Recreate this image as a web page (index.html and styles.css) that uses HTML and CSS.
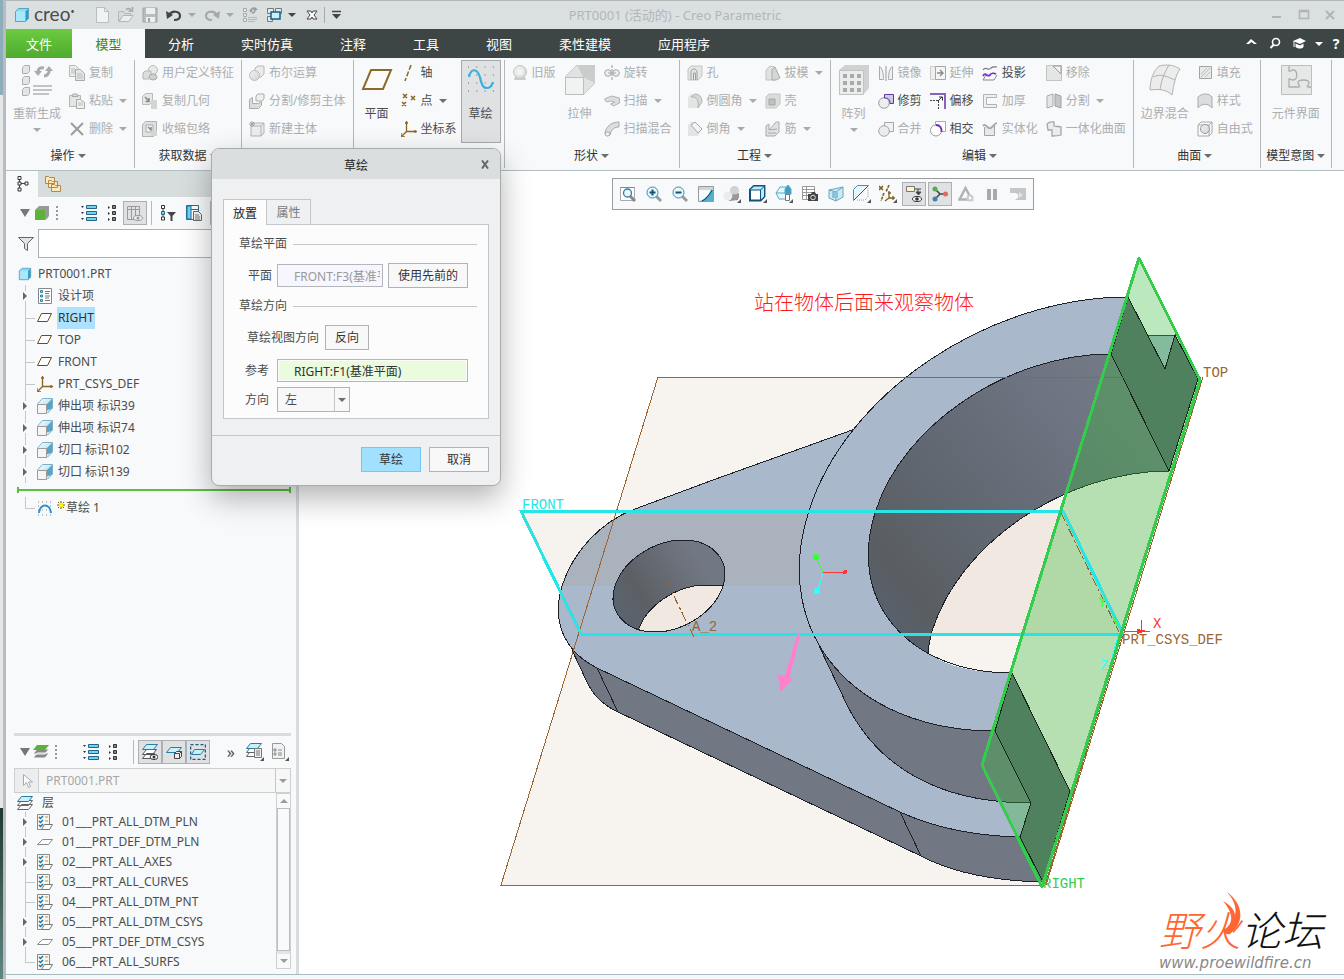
FILE: index.html
```html
<!DOCTYPE html>
<html lang="zh-CN">
<head>
    <meta charset="UTF-8">
    <meta name="viewport" content="width=device-width, initial-scale=1.0">
    <title>PRT0001 (活动的) - Creo Parametric</title>
    <link rel="stylesheet" href="styles.css">
</head>
<body>
    <!-- icon set -->
    <svg class="defs" aria-hidden="true">
        <defs>
            <linearGradient id="g-sky" x1="0" y1="0" x2="1" y2="1"><stop offset="0" stop-color="#fff"/><stop offset="1" stop-color="#8fd0e8"/></linearGradient>
            <linearGradient id="g-grey" x1="0" y1="0" x2="1" y2="1"><stop offset="0" stop-color="#f2f3f3"/><stop offset="1" stop-color="#d2d4d4"/></linearGradient>
            <linearGradient id="g-wall" x1="870" y1="600" x2="1120" y2="400" gradientUnits="userSpaceOnUse"><stop offset="0" stop-color="#57616d"/><stop offset=".12" stop-color="#5a5e62"/><stop offset=".4" stop-color="#606770"/><stop offset=".8" stop-color="#6d7380"/><stop offset="1" stop-color="#727985"/></linearGradient>
            <linearGradient id="g-bore" x1="615" y1="610" x2="700" y2="560" gradientUnits="userSpaceOnUse"><stop offset="0" stop-color="#596470"/><stop offset=".3" stop-color="#5c6065"/><stop offset="1" stop-color="#727883"/></linearGradient>
            <clipPath id="c-open"><path d="M1169,471 C1066,471 960,542 932,631 Q930,642 928,653 C947,667 975,673 1012,673 L1070,791 Z"/></clipPath>
            <clipPath id="c-bore"><path d="M683,540 C653,540 623,561 615,586 C607,611 625,632 655,632 C685,632 715,611 723,586 C731,561 713,540 683,540 Z"/></clipPath>
        </defs>
        <symbol id="i-down" viewBox="0 0 8 4"><path d="M0 0h8L4 4z" fill="currentColor"/></symbol>
        <symbol id="i-cube" viewBox="0 0 16 16"><path d="M1.500 4.500l3-3h10v10l-3 3h-10z" fill="#8adcf5"/><path d="M1.500 4.500h10v10h-10z" fill="#a9e8fb"/><path d="M11.500 4.500l3-3v10l-3 3z" fill="#2f9ec4"/><path d="M1.500 4.500l3-3h10v10l-3 3h-10z" fill="none" stroke="#5aa3c0"/></symbol>
        <symbol id="i-new" viewBox="0 0 16 16"><path d="M2.500.5h8l4 4v11h-12z" fill="#f1f3f3" stroke="#b9bdbd"/><path d="M10.500.5v4h4" fill="none" stroke="#b9bdbd"/></symbol>
        <symbol id="i-open" viewBox="0 0 16 16"><path d="M.5 14V4.500h5l1 2h6v3H5z" fill="#d8dcdc" stroke="#b2b6b6"/><path d="M1 14.500l4-6h10l-4 6z" fill="#eceeee" stroke="#b2b6b6"/><path d="M8 3c1-2 4-2 5 0M14.500 0v4h-4" fill="none" stroke="#a2a6a6" stroke-width="1.500"/></symbol>
        <symbol id="i-save" viewBox="0 0 16 16"><path d="M1 1h14v14H1z" fill="#b9bdbd" stroke="#9fa3a3"/><path d="M4 1h9v6H4zM4 10h9v5H4z" fill="#eef0f0"/><path d="M6 11h2v4H6z" fill="#9fa3a3"/></symbol>
        <symbol id="i-undo" viewBox="0 0 16 16"><path d="M3 8c3-5 11-4 11 1 0 3-3 4-6 4" fill="none" stroke="currentColor" stroke-width="2.200"/><path d="M0 4l1 8 6-4z" fill="currentColor"/></symbol>
        <symbol id="i-redo" viewBox="0 0 16 16"><path d="M13 8C10 3 2 4 2 9c0 3 3 4 6 4" fill="none" stroke="currentColor" stroke-width="2.200"/><path d="M16 4l-1 8-6-4z" fill="currentColor"/></symbol>
        <symbol id="i-regen" viewBox="0 0 32 32"><g fill="#e4e5e5" stroke="#acaeae"><path d="M1.500 3.500l2-2h5v6l-2 2h-5zM1.500 14.500l2-2h5v6l-2 2h-5zM1.500 25.500l2-2h5v6l-2 2h-5z"/></g><path d="M12 22h19M12 26h19M12 30h16" stroke="#c2c4c4" stroke-width="2"/><path d="M17 8c0-3 2-5 6-4M28 5c1 4-2 7-5 7" fill="none" stroke="#aaacac" stroke-width="3"/><path d="M13 7h8l-4 5zM24 7l4-5 4 5z" fill="#aaacac"/></symbol>
        <symbol id="i-windows" viewBox="0 0 16 16"><path d="M1.500 1.500h6v5h-6zM9.500 1.500h6v5h-6zM1.500 9.500h5v5h-5z" fill="#e6eaea" stroke="#777"/><path d="M5 5h9v7H5z" fill="#c9f0fb" stroke="#1b5c80" stroke-width="1.500"/></symbol>
        <symbol id="i-closewin" viewBox="0 0 16 16"><path d="M3 4h4l1 2 1-2h4l-3 4 3 4H9l-1-2-1 2H3l3-4z" fill="#fff" stroke="#444"/></symbol>
        <symbol id="i-copy" viewBox="0 0 16 16"><path d="M.5.5h6l3 3v8h-9z" fill="#ececec" stroke="#b8baba"/><path d="M6.500 4.500h5l4 4v7h-9z" fill="#e4e5e5" stroke="#a9abab"/><path d="M2 4h4M2 6h4M2 8h4M8 9h5M8 11h6M8 13h6" stroke="#bbb"/></symbol>
        <symbol id="i-paste" viewBox="0 0 16 16"><path d="M.5 2.500h11v11H.5z" fill="#e4e5e5" stroke="#b5b7b7"/><path d="M3 3.500h6L8 1H4z" fill="#ddd" stroke="#aaa"/><path d="M7.500 6.500h4l4 3v6h-8z" fill="#f0f0f0" stroke="#a9abab"/><path d="M9 10h5M9 12h5" stroke="#bbb"/></symbol>
        <symbol id="i-delete" viewBox="0 0 16 16"><path d="M2 2l12 12M14 2L2 14" stroke="#9b9d9d" stroke-width="2"/></symbol>
        <symbol id="i-udf" viewBox="0 0 16 16"><circle cx="11" cy="5" r="4.500" fill="#e7e8e8" stroke="#bbb"/><path d="M1 8l2-2h6v6l-2 2H1z" fill="#dcdddd" stroke="#b5b5b5"/><ellipse cx="11" cy="12" rx="4" ry="3" fill="#d0d2d2" stroke="#aaa"/></symbol>
        <symbol id="i-copygeo" viewBox="0 0 16 16"><path d="M.5 3.500l3-3h7v8l-3 3h-7z" fill="#e6e7e7" stroke="#b9bbbb"/><path d="M9 7h6v9H9z" fill="#d3d5d5"/><path d="M3 4l4 4M7 5v3.500H3.500" fill="none" stroke="#888" stroke-width="1.500"/></symbol>
        <symbol id="i-shrink" viewBox="0 0 16 16"><path d="M.5 3.500l3-3h11v12l-3 3H.5z" fill="#dfe0e0" stroke="#b1b3b3"/><path d="M4 4h7v7H4z" fill="#f2f2f2" stroke="#aaa"/><path d="M6 6l3 3V6" fill="none" stroke="#888" stroke-width="1.500"/><path d="M9 10h6v5H9z" fill="#d3d5d5"/></symbol>
        <symbol id="i-bool" viewBox="0 0 16 16"><path d="M6 3l3-2h6v8l-3 3H6z" fill="#ececec" stroke="#b9b9b9"/><circle cx="5.500" cy="10.500" r="5" fill="url(#g-grey)" stroke="#bbb"/></symbol>
        <symbol id="i-split" viewBox="0 0 16 16"><path d="M.5 6.500l3-2v6h6l3-2v4l-3 3h-9z" fill="#dcdddd" stroke="#a9abab"/><path d="M7 3l2-2h6v5l-2 2H7z" fill="#eee" stroke="#a9abab"/></symbol>
        <symbol id="i-newbody" viewBox="0 0 16 16"><path d="M2 5l3-3h10v10l-3 3H2z" fill="#ececec" stroke="#b1b3b3"/><path d="M2 5h10v10M12 5l3-3" fill="none" stroke="#b1b3b3"/><path d="M3 0v6M0 3h6M1 1l4 4M5 1L1 5" stroke="#a2a4a4"/></symbol>
        <symbol id="i-bigplane" viewBox="0 0 32 32"><path d="M10 6h20l-8 19H2z" fill="#fdfcfa" stroke="#8c6a2c" stroke-width="2"/></symbol>
        <symbol id="i-axis" viewBox="0 0 16 16"><path d="M10 0L4 16" stroke="#8a6520" stroke-width="1.500" stroke-dasharray="5 2"/></symbol>
        <symbol id="i-point" viewBox="0 0 16 16"><path d="M2 1l4 4M6 1L2 5M10 3l4 4M14 3l-4 4M1 9l4 4M5 9l-4 4" stroke="#8a6520" stroke-width="1.500"/></symbol>
        <symbol id="i-csys" viewBox="0 0 16 16"><path d="M5.500 0v10.500H16M5.500 10.500L1 15M4 2h3M14 9v3M0 12v4h4" fill="none" stroke="#8a6520" stroke-width="1.300"/></symbol>
        <symbol id="i-sketch" viewBox="0 0 32 32"><path d="M3 3h26M3 11h26M3 19h26M3 27h26" stroke="#666" stroke-dasharray="1 7.300"/><path d="M4 13C6 4 12 4 15 13c2 10 4 11 7 11 4 0 5-3 6-6" fill="none" stroke="#3ab0dc" stroke-width="2.200"/></symbol>
        <symbol id="i-legacy" viewBox="0 0 16 16"><path d="M3 12h10l1 3H2z" fill="#ccc"/><circle cx="8" cy="7" r="6.500" fill="url(#g-grey)" stroke="#c2c4c4"/><circle cx="8" cy="7" r="3.500" fill="#f2f2f2"/></symbol>
        <symbol id="i-bigextrude" viewBox="0 0 32 32"><path d="M1 13L13 1h18v18L19 31V13z" fill="#e1e2e2"/><path d="M13 1h18v18L19 13z" fill="#cbcdcd"/><path d="M1.500 13.500h18v17h-18z" fill="#f1f2f2" stroke="#bdbfbf"/><path d="M1 13L13 1M19 13L31 1M19 31l12-12" stroke="#c5c7c7" fill="none"/></symbol>
        <symbol id="i-revolve" viewBox="0 0 16 16"><path d="M8 0v16" stroke="#999" stroke-dasharray="3 1"/><circle cx="4" cy="8" r="3.300" fill="#eee" stroke="#a5a7a7"/><circle cx="12" cy="8" r="3.300" fill="#eee" stroke="#a5a7a7"/><path d="M4 8h8" stroke="#a5a7a7"/></symbol>
        <symbol id="i-sweep" viewBox="0 0 16 16"><path d="M.5 6l7-3 8 2v5l-6 3-3-2 4-2-4-1-4 1z" fill="#dcdddd" stroke="#b1b3b3"/></symbol>
        <symbol id="i-blend" viewBox="0 0 16 16"><path d="M1 12C2 5 8 1 15 1v5c-4 0-8 2-9 8l-3 1z" fill="#dcdddd" stroke="#a8aaaa"/><ellipse cx="3.500" cy="13" rx="2.500" ry="2" fill="#f2f2f2" stroke="#a8aaaa"/></symbol>
        <symbol id="i-hole" viewBox="0 0 16 16"><path d="M1 4l3-3h11v10l-4 4H1z" fill="#e4e5e5" stroke="#c3c5c5"/><path d="M4 15V7c0-4 6-4 6 0v8M6.500 15V8h2v7" fill="none" stroke="#9fa1a1"/></symbol>
        <symbol id="i-draft" viewBox="0 0 16 16"><path d="M1 5l4-4 5 1v13H1z" fill="#e0e1e1" stroke="#c2c4c4"/><path d="M7 5l3-3 5 11-4 2H7z" fill="#d4d6d6" stroke="#aaacac"/></symbol>
        <symbol id="i-round" viewBox="0 0 16 16"><path d="M1 4l3-3h4c5 0 7 3 7 8l-4 6H1z" fill="#e3e4e4"/><path d="M4 4c6-1 8 4 7 11l4-6C15 4 12 1 8 1z" fill="#d6d8d8" stroke="#b1b3b3"/></symbol>
        <symbol id="i-shell" viewBox="0 0 16 16"><path d="M1 4l3-3h11v10l-4 4H1z" fill="#dbdcdc" stroke="#c3c5c5"/><path d="M4 6h6v6H4z" fill="#bfc1c1" stroke="#a5a7a7"/></symbol>
        <symbol id="i-chamfer" viewBox="0 0 16 16"><path d="M1 4l3-3h4l7 7-4 7H1z" fill="#e3e4e4"/><path d="M4 4l4-3 7 7-4 4z" fill="#f4f4f4" stroke="#a5a7a7"/></symbol>
        <symbol id="i-rib" viewBox="0 0 16 16"><path d="M1 5l3-2v6l7-8h3v10l-4 4H1z" fill="#e0e1e1" stroke="#aaacac"/><path d="M4 9l8-1M3 12h8" stroke="#aaa"/></symbol>
        <symbol id="i-pattern" viewBox="0 0 32 32"><path d="M1 6l6-5h24v23l-6 7H1z" fill="#d0d2d2"/><path d="M1.500 6.500h24v24h-24z" fill="#ebecec" stroke="#c0c2c2"/><g fill="#a9abab"><path d="M5 10h4v4H5zM12 10h4v4h-4zM19 10h4v4h-4zM5 17h4v4H5zM12 17h4v4h-4zM19 17h4v4h-4zM5 24h4v4H5zM12 24h4v4h-4zM19 24h4v4h-4z"/></g></symbol>
        <symbol id="i-mirror" viewBox="0 0 16 16"><path d="M1.500 14.500v-13c4 2 4 11 4 13zM14.500 14.500v-13c-4 2-4 11-4 13z" fill="#f0f1f1" stroke="#a9abab"/><path d="M8 1v15" stroke="#999"/></symbol>
        <symbol id="i-trim" viewBox="0 0 16 16"><circle cx="6" cy="10" r="5.300" fill="#edeef0" stroke="#9a9da0"/><path d="M6.500 1.500h9v9H12C12 6 10 5 6.500 5z" fill="#d5c8f0" stroke="#5b3a9b"/></symbol>
        <symbol id="i-merge" viewBox="0 0 16 16"><path d="M6.500 1.500h9v9h-9z" fill="#f1f1f1" stroke="#a5a7a7"/><circle cx="6" cy="10" r="5.300" fill="#ececec" stroke="#a5a7a7"/></symbol>
        <symbol id="i-extend" viewBox="0 0 16 16"><path d="M.5 1.500h5v13h-5z" fill="#eee" stroke="#ccc"/><path d="M5.500 1.500h10v13h-10z" fill="#f4f4f4" stroke="#a5a7a7"/><path d="M7 8h6M10 5l3 3-3 3" fill="none" stroke="#888" stroke-width="1.300"/></symbol>
        <symbol id="i-offset" viewBox="0 0 16 16"><path d="M0 1h15v15" fill="none" stroke="#8763bd" stroke-width="2"/><path d="M0 7.500h8.500V16" fill="none" stroke="#444" stroke-dasharray="2 1"/><path d="M8 8l4-4M9 4h3.500v3.500" fill="none" stroke="#333"/></symbol>
        <symbol id="i-intersect" viewBox="0 0 16 16"><path d="M5.500.5h10v10h-10z" fill="#fdfdfd" stroke="#aaa"/><circle cx="6" cy="9.500" r="5.500" fill="#fff" stroke="#999"/><path d="M6 4c4 0 6 3 5.500 7" fill="none" stroke="#6a2fb0" stroke-width="1.800"/></symbol>
        <symbol id="i-project" viewBox="0 0 16 16"><path d="M1 5c3-5 5 2 8-2 2-2 4-1 6-1" fill="none" stroke="#777" stroke-width="1.200"/><path d="M4 10L1 15h11l3-5" fill="none" stroke="#888"/><path d="M1 11c3-5 4 2 7-1 1-2 4-2 6-1" fill="none" stroke="#7b2fd0" stroke-width="1.800"/></symbol>
        <symbol id="i-thicken" viewBox="0 0 16 16"><path d="M14.500 1.500h-13v13h13v-3h-10v-7h10z" fill="#f0f0f0" stroke="#b1b3b3"/></symbol>
        <symbol id="i-solidify" viewBox="0 0 16 16"><path d="M2.500 6v8.500h10V4" fill="#e7e8e8" stroke="#a2a4a4"/><path d="M1 5c3-4 4 4 8 2 2-1 2-4 6-5" fill="none" stroke="#a2a4a4" stroke-width="1.600"/></symbol>
        <symbol id="i-remove" viewBox="0 0 16 16"><path d="M.5.500h15v15H.5z" fill="#e4e5e5" stroke="#c3c5c5"/><path d="M7 1l8 8V1z" fill="#f4f4f4" stroke="#999"/></symbol>
        <symbol id="i-divide" viewBox="0 0 16 16"><path d="M1 3l6-2v12l-6 2z" fill="#e4e5e5" stroke="#a9abab"/><path d="M9 1l6 2v12l-6-2z" fill="#c4c6c6" stroke="#a0a2a2"/></symbol>
        <symbol id="i-unify" viewBox="0 0 16 16"><path d="M1 3c3-3 5-2 7-2v4c3 1 5 0 7 1v8c-3 1-6 1-9 1V9H2z" fill="#ececec" stroke="#a5a7a7" stroke-width="1.300"/></symbol>
        <symbol id="i-boundary" viewBox="0 0 32 32"><path d="M10 2c8-2 15-1 21 3-5 7-6 16-8 26-6-6-14-6-22-5C1 16 4 8 10 2z" fill="#ececec" stroke="#b1b3b3"/><path d="M4 13c8-4 15 0 22 3M20 1c-5 8-8 17-9 25" fill="none" stroke="#b1b3b3"/></symbol>
        <symbol id="i-fill" viewBox="0 0 16 16"><path d="M2.500 1.500h12v12h-12z" fill="#e8e9e9" stroke="#a2a4a4"/><path d="M4 9l6-6M4 12l9-9M8 12l5-5" stroke="#bcbebe"/></symbol>
        <symbol id="i-style" viewBox="0 0 16 16"><path d="M1 4c4-4 11-4 14 0v11c-4-5-10-5-14 0z" fill="#dcdede" stroke="#a9abab"/></symbol>
        <symbol id="i-freestyle" viewBox="0 0 16 16"><path d="M1 4l3-3h11v11l-3 3H1zM1 4h11v11M12 4l3-3" fill="none" stroke="#aaa"/><circle cx="8" cy="8" r="4.500" fill="url(#g-grey)" stroke="#999"/></symbol>
        <symbol id="i-puzzle" viewBox="0 0 32 32"><path d="M1.500 1.500h30v29h-30z" fill="#e6e7e7" stroke="#bdbfbf"/><path d="M9 2v5c1 1 2-1 4-1 5 0 5 10 0 10-2 0-3-2-4-1v8h10c2-1-1-2-1-4 0-4 11-4 11 0 0 2-3 3-1 4h3" fill="none" stroke="#acaeae" stroke-width="1.300"/></symbol>
        <symbol id="i-modeltree" viewBox="0 0 16 16"><path d="M3.500 3v10M5 7.500h6" stroke="#444"/><path d="M2 .5h3v3H2zM2 6h3v3H2zM2 12h3v3H2zM9 6h3v3H9z" fill="#fff" stroke="#333"/></symbol>
        <symbol id="i-folders" viewBox="0 0 16 16"><g fill="#fbe8bd" stroke="#b18b45"><path d="M.5.500h3l1 1h5v6h-9zM3.500 4.500h3l1 1h5v6h-9zM6.500 8.500h3l1 1h5v6h-9z"/></g></symbol>
        <symbol id="i-greencube" viewBox="0 0 16 16"><path d="M1 5l4-4h10v10l-3 4z" fill="#999"/><path d="M1 5h10v10H1z" fill="#5bb435"/></symbol>
        <symbol id="i-dots" viewBox="0 0 4 16"><path d="M2 1v15" stroke="#999" stroke-width="2" stroke-dasharray="2 2"/></symbol>
        <symbol id="i-list" viewBox="0 0 16 16"><path d="M5.500.500h10v3h-10zM5.500 6.500h10v3h-10zM5.500 12.500h10v3h-10z" fill="#6fd3f5" stroke="#246585"/><path d="M0 1h3L1.500 3zM0 7h3L1.500 9zM0 13h3l-1.500 2z" fill="#333"/></symbol>
        <symbol id="i-list2" viewBox="0 0 16 16"><path d="M8.500.500h3v3h-3zM8.500 6.500h3v3h-3zM8.500 12.500h3v3h-3z" fill="#888" stroke="#333"/><path d="M4 1v3l2-1.500zM4 7v3l2-1.500zM4 13v3l2-1.500z" fill="#333"/></symbol>
        <symbol id="i-colview" viewBox="0 0 16 16"><path d="M.5 1.500h12v13H.5zM.5 4.500h12M4.500 1.500v13M8.500 1.500v13" fill="none" stroke="#999"/><ellipse cx="11" cy="13" rx="4.500" ry="2.500" fill="#eee" stroke="#999"/><circle cx="11" cy="13" r="1.500" fill="#999"/></symbol>
        <symbol id="i-treefilter" viewBox="0 0 16 16"><path d="M3 4v8" stroke="#444"/><path d="M1.500.500h3v3h-3zM1.500 12h3v3h-3z" fill="#fff" stroke="#333"/><path d="M1.500 6.500h3v3h-3z" fill="#6fd3f5" stroke="#246585"/><path d="M7 7h9l-3.500 4v5h-2v-5z" fill="#444"/></symbol>
        <symbol id="i-treecols" viewBox="0 0 16 16"><path d="M.5.500h12v14H.5zM.5 4.500h12" fill="#fff" stroke="#236f95"/><path d="M1 1h4v13H1z" fill="#6fd3f5" stroke="#236f95"/><path d="M7.500 6.500h5l3 3v6h-8z" fill="#f4f4f4" stroke="#666"/><path d="M9 10h4M9 12h5M9 14h5" stroke="#777"/></symbol>
        <symbol id="i-funnel" viewBox="0 0 16 16"><path d="M.5 1.500h15l-6 6v7l-3-2v-5z" fill="#e1e3e4" stroke="#666"/></symbol>
        <symbol id="i-design" viewBox="0 0 16 16"><path d="M1.500.5h13v15h-13z" fill="#fff" stroke="#888"/><path d="M3.500 2.500h2v2h-2zM3.500 7h2v2h-2zM3.500 11.500h2v2h-2z" fill="#9be0fa" stroke="#2a84ad"/><path d="M8 3.500h5M8 5.500h4M8 8h5M8 10h4M8 12.500h5" stroke="#777"/></symbol>
        <symbol id="i-plane" viewBox="0 0 16 16"><path d="M4.500 3.500h10l-4 8H.5z" fill="#fff" stroke="#6b4d13"/></symbol>
        <symbol id="i-extrude" viewBox="0 0 16 16"><path d="M.5 6l5-5.500h10V10l-5 5.500z" fill="url(#g-sky)"/><path d="M9.500 6.500l6-6V10l-6 5.500z" fill="#5ba3c4"/><path d="M9.500 12.500l5-1.500-5 5z" fill="#d5effa"/><path d="M.5 6.500h9v9h-9z" fill="#f5f5f5" stroke="#9b9b9b"/><path d="M.5 6l5-5.500h10V10l-5 5" fill="none" stroke="#7ab2cb"/></symbol>
        <symbol id="i-curve" viewBox="0 0 16 16"><path d="M1 2h14M1 6h14M1 10h14M1 15h14" stroke="#888" stroke-dasharray="1 3"/><path d="M2 13C3 3 13 3 14 13" fill="none" stroke="#2a93c4" stroke-width="2"/></symbol>
        <symbol id="i-greenlayers" viewBox="0 0 16 16"><path d="M4 9h12l-4 5H0zM4 5h12l-4 5H0z" fill="#888" stroke="#f7f9fb"/><path d="M4 1h12l-4 5H0z" fill="#5bb435"/></symbol>
        <symbol id="i-layers" viewBox="0 0 16 16"><path d="M4.500 9.500h11l-4 5H.5zM4.500 5.500h11l-4 5H.5z" fill="#fff" stroke="#666"/><path d="M4.500 1.500h11l-4 5H.5z" fill="#c9effb" stroke="#2a7ba0"/></symbol>
        <symbol id="i-layereye" viewBox="0 0 16 16"><path d="M4.500 9.500h8l-4 5h-8zM4.500 5.500h10l-4 5h-10z" fill="#fff" stroke="#555"/><path d="M4.500.500h11l-4 5H.5z" fill="#c9effb" stroke="#2a7ba0"/><ellipse cx="12" cy="13" rx="4" ry="2.500" fill="#fff" stroke="#333"/><circle cx="12" cy="13" r="1.500" fill="#333"/></symbol>
        <symbol id="i-layerbox" viewBox="0 0 16 16"><path d="M4.500 3.500h11l-4 5H.5z" fill="#c9effb" stroke="#2a7ba0"/><path d="M8.500 9.500l2-2h5v5l-2 2h-5zM8.500 9.500h5v5M13.500 9.500l2-2" fill="#eee" stroke="#444"/></symbol>
        <symbol id="i-layersel" viewBox="0 0 16 16"><path d="M.5.500h15v15H.5z" fill="none" stroke="#1b5c80" stroke-width="1.500" stroke-dasharray="3 2"/><path d="M4.500 5.500h10l-4 5h-9z" fill="#c9effb" stroke="#2a7ba0"/></symbol>
        <symbol id="i-layerdoc" viewBox="0 0 20 20"><path d="M4.500 10.500h9l-4 4h-8zM4.500 6.500h10l-4 4h-9z" fill="#fff" stroke="#666"/><path d="M5.500 1.500h11l-4 5H1.500z" fill="#c9effb" stroke="#2a7ba0"/><path d="M9.500 6.500h7v9h-7z" fill="#eee" stroke="#777"/><path d="M11 9h4M11 11h4M11 13h4" stroke="#777"/><path d="M19 15v4h-4z" fill="#555"/></symbol>
        <symbol id="i-listdoc" viewBox="0 0 20 20"><path d="M2.500 1.500h9l3 3v12h-12z" fill="#f1f2f2" stroke="#999"/><path d="M4 7h2v2H4zM4 11h2v2H4z" fill="#fff" stroke="#888"/><path d="M8 8h4M8 11h4M8 13h4" stroke="#888"/><path d="M19 15v4h-4z" fill="#555"/></symbol>
        <symbol id="i-check" viewBox="0 0 16 16"><path d="M.5.500h12v15H.5z" fill="#fdf6e6" stroke="#8a8a8a"/><path d="M2 3l1.500 1.500L6 2M2 7l1.500 1.500L6 6M2 11l1.500 1.500L6 10" fill="none" stroke="#1378b5" stroke-width="1.500"/><path d="M8 3h3M8 7h3" stroke="#999"/><path d="M7.500 10.500h8l-3 5h-8z" fill="#fff" stroke="#777"/></symbol>
        <symbol id="i-flat" viewBox="0 0 16 16"><path d="M5.500 5.500h10l-4 5h-11z" fill="#fff" stroke="#8a8a8a"/></symbol>
        <symbol id="i-cursor" viewBox="0 0 16 16"><path d="M4.500 1.500v11l3-3 2 5 2-1-2-4.500h4z" fill="#fafafa" stroke="#aaa"/></symbol>
        <symbol id="v-refit" viewBox="0 0 16 16"><path d="M.5 1.500h14v13H.5z" fill="#fff" stroke="#aaa"/><path d="M.5 1.500h14" stroke="#888"/><path d="M10 10l5 5" stroke="#888" stroke-width="3"/><circle cx="7.500" cy="7" r="4" fill="#e8f8fd" stroke="#2f7da0" stroke-width="1.300"/></symbol>
        <symbol id="v-in" viewBox="0 0 16 16"><path d="M10 10l5 5" stroke="#999" stroke-width="3"/><circle cx="6.500" cy="6.500" r="5.500" fill="#e8f8fd" stroke="#3e8aab"/><path d="M3.500 6.500h6M6.500 3.500v6" stroke="#0f5378" stroke-width="2"/></symbol>
        <symbol id="v-out" viewBox="0 0 16 16"><path d="M10 10l5 5" stroke="#999" stroke-width="3"/><circle cx="6.500" cy="6.500" r="5.500" fill="#e8f8fd" stroke="#3e8aab"/><path d="M3.500 6.500h6" stroke="#0f5378" stroke-width="2"/></symbol>
        <symbol id="v-repaint" viewBox="0 0 16 16"><path d="M.5.500h15v15H.5z" fill="#cfd6d9" stroke="#999"/><path d="M1 4h14v11H1z" fill="#55b0cf"/><path d="M1 4h13C12 10 8 14 1 15z" fill="#f2fbfe"/><path d="M4 15c2-1 7-5 10-11" fill="none" stroke="#17506e" stroke-width="1.300"/></symbol>
        <symbol id="v-render" viewBox="0 0 18 18"><path d="M4 10l6-5 5 1v9l-9 1z" fill="#8b8b8b"/><circle cx="11.500" cy="5.500" r="4.500" fill="#d2d2d2"/><circle cx="5" cy="11" r="4.500" fill="#ececec"/><path d="M10 9c2 1 4 0 6-1v5c-2 2-4 2-6 2z" fill="#999"/><path d="M18 14v4h-4z" fill="#555"/></symbol>
        <symbol id="v-display" viewBox="0 0 18 18"><path d="M.7 4.500l4-3.800h11v11l-4 4H.7z" fill="#b9ebfb" stroke="#0f5378" stroke-width="1.400"/><path d="M1.500 5h10v10h-10z" fill="#fff" stroke="#0f5378"/><path d="M11.500 5l4-4" stroke="#0f5378"/><path d="M18 14v4h-4z" fill="#555"/></symbol>
        <symbol id="v-saved" viewBox="0 0 18 18"><path d="M1 8l4-6h6l5 6-4 6H4z" fill="#e5f8fe" stroke="#59a8c6"/><path d="M1 8h15" stroke="#59a8c6"/><path d="M10 9V4l3-4 3 4v5z" fill="#3ba0c5" stroke="#59a8c6"/><path d="M10.500 9.500h4v6h-4z" fill="#fff" stroke="#777"/><path d="M18 14v4h-4z" fill="#555"/></symbol>
        <symbol id="v-manager" viewBox="0 0 16 16"><path d="M.5.500h12v13H.5zM.5 3.500h12M.5 6.500h12M.5 9.500h12M4.500.500v13" fill="#fff" stroke="#999"/><path d="M6 8h3l1-2h3l1 2h2v7H6z" fill="#444"/><circle cx="11" cy="11.500" r="2.300" fill="#444" stroke="#ddd"/></symbol>
        <symbol id="v-persp" viewBox="0 0 16 16"><path d="M1 4l14-3v10l-7 4-7-3z" fill="#c8ebf7" stroke="#6ba5bc"/><path d="M1 4l7 2 7-5M8 6v9" fill="none" stroke="#6ba5bc"/><path d="M4 6h6v6H4z" fill="#8cc3d9"/></symbol>
        <symbol id="v-section" viewBox="0 0 18 18"><path d="M.5 15.500v-11l4-4h11z" fill="#e3f7fd" stroke="#4294b5"/><path d="M1 15L15 1" stroke="#1f5f80"/><path d="M4 15h8l3-3V3" fill="none" stroke="#999" stroke-dasharray="1 1"/><path d="M18 14v4h-4z" fill="#555"/></symbol>
        <symbol id="v-datum" viewBox="0 0 18 18"><path d="M0 1l4 4M4 1L0 5" stroke="#80601f" stroke-width="1.600"/><path d="M10 0L7 7M5 8l-3 8" fill="none" stroke="#80601f" stroke-width="1.600" stroke-dasharray="3 1"/><path d="M10 6v7h6M10 13l-4 3M9 8h3M14 11v4" fill="none" stroke="#80601f" stroke-width="1.300"/><path d="M18 14v4h-4z" fill="#555"/></symbol>
        <symbol id="v-annot" viewBox="0 0 16 16"><path d="M.5.500h8v5h-8z" fill="#fff3d0" stroke="#777"/><path d="M9 3h6M12 3v4M10 6h5l-2.500 3z" fill="#444" stroke="#444"/><ellipse cx="11" cy="13" rx="4.500" ry="2.500" fill="#fff" stroke="#333"/><circle cx="11" cy="13" r="1.800" fill="#333"/></symbol>
        <symbol id="v-spin" viewBox="0 0 16 16"><path d="M3 3l5 5-5 5M8 8h6" fill="none" stroke="#444" stroke-width="1.500"/><circle cx="3" cy="3" r="2.500" fill="#59a657"/><circle cx="13.500" cy="8" r="2.500" fill="#e06a62"/><circle cx="3" cy="13" r="2.500" fill="#3e83b5"/></symbol>
        <symbol id="v-sim" viewBox="0 0 16 16"><path d="M7.500 2l6 11.500h-12z" fill="none" stroke="#b1b3b3" stroke-width="2.500"/><circle cx="12" cy="12" r="3.500" fill="#ccc"/><path d="M11 10v4l3-2z" fill="#fff"/></symbol>
        <symbol id="v-pause" viewBox="0 0 16 16"><path d="M3 3h4v11H3zM9 3h4v11H9z" fill="#a9abab"/></symbol>
        <symbol id="v-anim" viewBox="0 0 16 16"><path d="M0 2h16v12H5c4-2 5-6 0-7H0z" fill="#c5c7c7"/><path d="M9 6l4 3-4 3z" fill="#e4e4e4"/></symbol>
    </svg>

    <div class="desktop-edge"></div>
    <div class="app">
        <header class="titlebar">
            <div class="quick">
                <span class="logo"><svg class="icon"><use href="#i-cube"/></svg><span class="brand">creo<sup>•</sup></span></span>
                <button aria-label="新建"><svg class="icon"><use href="#i-new"/></svg></button>
                <button aria-label="打开"><svg class="icon"><use href="#i-open"/></svg></button>
                <button aria-label="保存"><svg class="icon"><use href="#i-save"/></svg></button>
                <button aria-label="撤消" class="dark"><svg class="icon"><use href="#i-undo"/></svg></button>
                <button aria-label="撤消列表" class="drop"><svg class="arrow"><use href="#i-down"/></svg></button>
                <button aria-label="重做"><svg class="icon"><use href="#i-redo"/></svg></button>
                <button aria-label="重做列表" class="drop"><svg class="arrow"><use href="#i-down"/></svg></button>
                <button aria-label="重新生成"><svg class="icon" viewBox="0 0 16 16"><path d="M1.500 1.500h3v3h-3zM1.500 6.500h3v3h-3zM1.500 11.500h3v3h-3z" fill="#e8eaea" stroke="#a5a9a9"/><path d="M6 10.500h9M6 12.500h9M6 14.500h7" stroke="#b4b8b8"/><path d="M7 3l2 3 2-3zM11 3l2-3 3 3z" fill="#999"/><path d="M9 4c0-2 1-3 3-3M13 3c0 2-1 3-3 3" fill="none" stroke="#999" stroke-width="1.500"/></svg></button>
                <button aria-label="窗口"><svg class="icon"><use href="#i-windows"/></svg></button>
                <button aria-label="窗口列表" class="drop dark"><svg class="arrow"><use href="#i-down"/></svg></button>
                <button aria-label="关闭"><svg class="icon"><use href="#i-closewin"/></svg></button>
                <button aria-label="自定义" class="dark custom"><svg class="icon" viewBox="0 0 16 16"><path d="M3 4.500h9" stroke="#444" stroke-width="1.500"/><path d="M3 7h9l-4.500 5z" fill="#444"/></svg></button>
            </div>
            <div class="title">PRT0001 (活动的) - Creo Parametric</div>
            <div class="window-buttons">
                <button aria-label="最小化"><svg class="icon" viewBox="0 0 16 16"><path d="M4 10h9" stroke="#b0b4b4" stroke-width="2"/></svg></button>
                <button aria-label="最大化"><svg class="icon" viewBox="0 0 16 16"><path d="M4.500 3.500h9v8h-9zM4 4.500h10" fill="none" stroke="#b0b4b4" stroke-width="1.500"/></svg></button>
                <button aria-label="关闭窗口"><svg class="icon" viewBox="0 0 16 16"><path d="M4 4l8 8M12 4l-8 8" stroke="#b0b4b4" stroke-width="2"/></svg></button>
            </div>
        </header>

        <nav class="menubar">
            <button class="menu file">文件</button>
            <button class="menu active">模型</button>
            <button class="menu">分析</button>
            <button class="menu">实时仿真</button>
            <button class="menu">注释</button>
            <button class="menu">工具</button>
            <button class="menu">视图</button>
            <button class="menu">柔性建模</button>
            <button class="menu">应用程序</button>
            <div class="menu-tools">
                <button aria-label="最小化功能区"><svg class="icon" viewBox="0 0 16 16"><path d="M3 8l5-5 6 5h-3L8.500 6 6 8z" fill="#fff"/></svg></button>
                <button aria-label="搜索"><svg class="icon" viewBox="0 0 16 16"><circle cx="9" cy="6" r="3.500" fill="none" stroke="#fff" stroke-width="1.600"/><path d="M7 8.500L3.500 12" stroke="#fff" stroke-width="2"/></svg></button>
                <button aria-label="学习"><svg class="icon" viewBox="0 0 16 16"><path d="M2 5l7-3 6 3-6 3zM4.500 7.500V11c3 2 6 2 8 0V7.500L9 9.500z" fill="#fff"/><path d="M3 5v6" stroke="#fff"/></svg></button>
                <button aria-label="学习列表" class="drop"><svg class="arrow"><use href="#i-down"/></svg></button>
                <button aria-label="帮助" class="help">?</button>
            </div>
        </nav>

        <section class="ribbon">
            <div class="group lead-big">
                <div class="group-body">
                    <button class="big" disabled><svg class="icon-big"><use href="#i-regen"/></svg>重新生成<svg class="arrow"><use href="#i-down"/></svg></button>
                    <div class="col">
                        <button class="cmd" disabled><svg class="icon"><use href="#i-copy"/></svg>复制</button>
                        <button class="cmd" disabled><svg class="icon"><use href="#i-paste"/></svg>粘贴<svg class="arrow"><use href="#i-down"/></svg></button>
                        <button class="cmd" disabled><svg class="icon"><use href="#i-delete"/></svg>删除<svg class="arrow"><use href="#i-down"/></svg></button>
                    </div>
                </div>
                <button class="group-name">操作<svg class="arrow"><use href="#i-down"/></svg></button>
            </div>
            <div class="group">
                <div class="group-body">
                    <div class="col">
                        <button class="cmd" disabled><svg class="icon"><use href="#i-udf"/></svg>用户定义特征</button>
                        <button class="cmd" disabled><svg class="icon"><use href="#i-copygeo"/></svg>复制几何</button>
                        <button class="cmd" disabled><svg class="icon"><use href="#i-shrink"/></svg>收缩包络</button>
                    </div>
                </div>
                <button class="group-name">获取数据<svg class="arrow"><use href="#i-down"/></svg></button>
            </div>
            <div class="group">
                <div class="group-body">
                    <div class="col">
                        <button class="cmd" disabled><svg class="icon"><use href="#i-bool"/></svg>布尔运算</button>
                        <button class="cmd" disabled><svg class="icon"><use href="#i-split"/></svg>分割/修剪主体</button>
                        <button class="cmd" disabled><svg class="icon"><use href="#i-newbody"/></svg>新建主体</button>
                    </div>
                </div>
            </div>
            <div class="group lead-big tail-big">
                <div class="group-body">
                    <button class="big"><svg class="icon-big"><use href="#i-bigplane"/></svg>平面</button>
                    <div class="col">
                        <button class="cmd"><svg class="icon"><use href="#i-axis"/></svg>轴</button>
                        <button class="cmd"><svg class="icon"><use href="#i-point"/></svg>点<svg class="arrow"><use href="#i-down"/></svg></button>
                        <button class="cmd"><svg class="icon"><use href="#i-csys"/></svg>坐标系</button>
                    </div>
                    <button class="big pressed"><svg class="icon-big"><use href="#i-sketch"/></svg>草绘</button>
                </div>
            </div>
            <div class="group">
                <div class="group-body">
                    <div class="col">
                        <button class="cmd" disabled><svg class="icon"><use href="#i-legacy"/></svg>旧版</button>
                    </div>
                    <button class="big" disabled><svg class="icon-big"><use href="#i-bigextrude"/></svg>拉伸</button>
                    <div class="col">
                        <button class="cmd" disabled><svg class="icon"><use href="#i-revolve"/></svg>旋转</button>
                        <button class="cmd" disabled><svg class="icon"><use href="#i-sweep"/></svg>扫描<svg class="arrow"><use href="#i-down"/></svg></button>
                        <button class="cmd" disabled><svg class="icon"><use href="#i-blend"/></svg>扫描混合</button>
                    </div>
                </div>
                <button class="group-name">形状<svg class="arrow"><use href="#i-down"/></svg></button>
            </div>
            <div class="group">
                <div class="group-body">
                    <div class="col">
                        <button class="cmd" disabled><svg class="icon"><use href="#i-hole"/></svg>孔</button>
                        <button class="cmd" disabled><svg class="icon"><use href="#i-round"/></svg>倒圆角<svg class="arrow"><use href="#i-down"/></svg></button>
                        <button class="cmd" disabled><svg class="icon"><use href="#i-chamfer"/></svg>倒角<svg class="arrow"><use href="#i-down"/></svg></button>
                    </div>
                    <div class="col">
                        <button class="cmd" disabled><svg class="icon"><use href="#i-draft"/></svg>拔模<svg class="arrow"><use href="#i-down"/></svg></button>
                        <button class="cmd" disabled><svg class="icon"><use href="#i-shell"/></svg>壳</button>
                        <button class="cmd" disabled><svg class="icon"><use href="#i-rib"/></svg>筋<svg class="arrow"><use href="#i-down"/></svg></button>
                    </div>
                </div>
                <button class="group-name">工程<svg class="arrow"><use href="#i-down"/></svg></button>
            </div>
            <div class="group lead-big">
                <div class="group-body">
                    <button class="big" disabled><svg class="icon-big"><use href="#i-pattern"/></svg>阵列<svg class="arrow"><use href="#i-down"/></svg></button>
                    <div class="col">
                        <button class="cmd" disabled><svg class="icon"><use href="#i-mirror"/></svg>镜像</button>
                        <button class="cmd"><svg class="icon"><use href="#i-trim"/></svg>修剪</button>
                        <button class="cmd" disabled><svg class="icon"><use href="#i-merge"/></svg>合并</button>
                    </div>
                    <div class="col">
                        <button class="cmd" disabled><svg class="icon"><use href="#i-extend"/></svg>延伸</button>
                        <button class="cmd"><svg class="icon"><use href="#i-offset"/></svg>偏移</button>
                        <button class="cmd"><svg class="icon"><use href="#i-intersect"/></svg>相交</button>
                    </div>
                    <div class="col">
                        <button class="cmd"><svg class="icon"><use href="#i-project"/></svg>投影</button>
                        <button class="cmd" disabled><svg class="icon"><use href="#i-thicken"/></svg>加厚</button>
                        <button class="cmd" disabled><svg class="icon"><use href="#i-solidify"/></svg>实体化</button>
                    </div>
                    <div class="col">
                        <button class="cmd" disabled><svg class="icon"><use href="#i-remove"/></svg>移除</button>
                        <button class="cmd" disabled><svg class="icon"><use href="#i-divide"/></svg>分割<svg class="arrow"><use href="#i-down"/></svg></button>
                        <button class="cmd" disabled><svg class="icon"><use href="#i-unify"/></svg>一体化曲面</button>
                    </div>
                </div>
                <button class="group-name">编辑<svg class="arrow"><use href="#i-down"/></svg></button>
            </div>
            <div class="group lead-big">
                <div class="group-body">
                    <button class="big" disabled><svg class="icon-big"><use href="#i-boundary"/></svg>边界混合</button>
                    <div class="col">
                        <button class="cmd" disabled><svg class="icon"><use href="#i-fill"/></svg>填充</button>
                        <button class="cmd" disabled><svg class="icon"><use href="#i-style"/></svg>样式</button>
                        <button class="cmd" disabled><svg class="icon"><use href="#i-freestyle"/></svg>自由式</button>
                    </div>
                </div>
                <button class="group-name">曲面<svg class="arrow"><use href="#i-down"/></svg></button>
            </div>
            <div class="group">
                <div class="group-body">
                    <button class="big" disabled><svg class="icon-big"><use href="#i-puzzle"/></svg>元件界面</button>
                </div>
                <button class="group-name">模型意图<svg class="arrow"><use href="#i-down"/></svg></button>
            </div>
        </section>

        <div class="workspace">
            <aside class="navigator">
                <div class="nav-tabs">
                    <button class="nav-tab current" aria-label="模型树"><svg class="icon"><use href="#i-modeltree"/></svg></button>
                    <button class="nav-tab" aria-label="文件夹浏览器"><svg class="icon"><use href="#i-folders"/></svg></button>
                </div>
                <div class="tree-tools">
                    <button class="fold" aria-label="折叠"><svg viewBox="0 0 10 8"><path d="M0 0h10L5 8z"/></svg></button>
                    <svg class="icon"><use href="#i-greencube"/></svg>
                    <svg class="grip"><use href="#i-dots"/></svg>
                    <button class="tool first" aria-label="展开"><svg class="icon"><use href="#i-list"/></svg></button>
                    <button class="tool" aria-label="收缩"><svg class="icon"><use href="#i-list2"/></svg></button>
                    <button class="tool on" aria-label="显示列"><svg class="icon"><use href="#i-colview"/></svg></button>
                    <i class="sep"></i>
                    <button class="tool" aria-label="树过滤器"><svg class="icon"><use href="#i-treefilter"/></svg></button>
                    <button class="tool" aria-label="树列"><svg class="icon"><use href="#i-treecols"/></svg></button>
                    <i class="sep"></i>
                </div>
                <div class="filter">
                    <svg class="icon"><use href="#i-funnel"/></svg>
                    <input type="text" aria-label="过滤模型树">
                </div>
                <div class="tree-root"><svg class="icon-root"><use href="#i-cube"/></svg>PRT0001.PRT</div>
                <ul class="tree">
                    <li class="node has-kids"><svg class="icon"><use href="#i-design"/></svg><span>设计项</span></li>
                    <li class="node"><svg class="icon"><use href="#i-plane"/></svg><span class="selected">RIGHT</span></li>
                    <li class="node"><svg class="icon"><use href="#i-plane"/></svg><span>TOP</span></li>
                    <li class="node"><svg class="icon"><use href="#i-plane"/></svg><span>FRONT</span></li>
                    <li class="node"><svg class="icon"><use href="#i-csys"/></svg><span>PRT_CSYS_DEF</span></li>
                    <li class="node has-kids"><svg class="icon"><use href="#i-extrude"/></svg><span>伸出项 标识39</span></li>
                    <li class="node has-kids"><svg class="icon"><use href="#i-extrude"/></svg><span>伸出项 标识74</span></li>
                    <li class="node has-kids"><svg class="icon"><use href="#i-extrude"/></svg><span>切口 标识102</span></li>
                    <li class="node has-kids"><svg class="icon"><use href="#i-extrude"/></svg><span>切口 标识139</span></li>
                </ul>
                <div class="insert-line"></div>
                <ul class="tree pending">
                    <li class="node last"><svg class="icon"><use href="#i-curve"/></svg><svg class="star" viewBox="0 0 8 8"><path d="M4 0v8M0 4h8M1 1l6 6M7 1L1 7" stroke="#6b6b00"/><path d="M2 2h4v4H2z" fill="#ffef00"/></svg><span>草绘 1</span></li>
                </ul>

                <div class="layer-pane">
                    <div class="tree-tools">
                        <button class="fold" aria-label="折叠层树"><svg viewBox="0 0 10 8"><path d="M0 0h10L5 8z"/></svg></button>
                        <svg class="icon"><use href="#i-greenlayers"/></svg>
                        <svg class="grip"><use href="#i-dots"/></svg>
                        <button class="tool second" aria-label="展开层"><svg class="icon"><use href="#i-list"/></svg></button>
                        <button class="tool" aria-label="收缩层"><svg class="icon"><use href="#i-list2"/></svg></button>
                        <i class="sep wide"></i>
                        <div class="joined">
                            <button class="tool on" aria-label="层可见性"><svg class="icon"><use href="#i-layereye"/></svg></button>
                            <button class="tool on" aria-label="层内容"><svg class="icon"><use href="#i-layerbox"/></svg></button>
                            <button class="tool on" aria-label="选定层"><svg class="icon"><use href="#i-layersel"/></svg></button>
                        </div>
                        <button class="tool more">»</button>
                        <button class="tool" aria-label="层设置"><svg class="icon-doc"><use href="#i-layerdoc"/></svg></button>
                        <button class="tool" aria-label="层列表"><svg class="icon-doc"><use href="#i-listdoc"/></svg></button>
                    </div>
                    <div class="model-pick">
                        <button aria-label="选取模型" disabled><svg class="icon"><use href="#i-cursor"/></svg></button>
                        <div class="pick">
                            <select aria-label="活动模型" disabled><option>PRT0001.PRT</option></select>
                            <svg class="arrow"><use href="#i-down"/></svg>
                        </div>
                    </div>
                    <div class="layer-body">
                        <div class="layer-list">
                            <div class="tree-root"><svg class="icon"><use href="#i-layers"/></svg>层</div>
                            <ul class="tree layers">
                                <li class="node has-kids"><svg class="icon"><use href="#i-check"/></svg><span>01___PRT_ALL_DTM_PLN</span></li>
                                <li class="node has-kids"><svg class="icon"><use href="#i-flat"/></svg><span>01___PRT_DEF_DTM_PLN</span></li>
                                <li class="node has-kids"><svg class="icon"><use href="#i-check"/></svg><span>02___PRT_ALL_AXES</span></li>
                                <li class="node"><svg class="icon"><use href="#i-check"/></svg><span>03___PRT_ALL_CURVES</span></li>
                                <li class="node"><svg class="icon"><use href="#i-check"/></svg><span>04___PRT_ALL_DTM_PNT</span></li>
                                <li class="node has-kids"><svg class="icon"><use href="#i-check"/></svg><span>05___PRT_ALL_DTM_CSYS</span></li>
                                <li class="node has-kids"><svg class="icon"><use href="#i-flat"/></svg><span>05___PRT_DEF_DTM_CSYS</span></li>
                                <li class="node last"><svg class="icon"><use href="#i-check"/></svg><span>06___PRT_ALL_SURFS</span></li>
                            </ul>
                        </div>
                        <div class="scrollbar">
                            <button aria-label="向上滚动"><svg class="arrow up"><use href="#i-down"/></svg></button>
                            <div class="thumb"></div>
                            <button aria-label="向下滚动"><svg class="arrow"><use href="#i-down"/></svg></button>
                        </div>
                    </div>
                </div>
            </aside>

            <main class="viewport">
                <svg class="scene" viewBox="299 171 1045 803" preserveAspectRatio="xMinYMin meet">
                    <!-- TOP datum -->
                    <path d="M658,377 H1201 L1045,885 H501 Z" fill="#f7f3ee" stroke="#996633"/>
                    <!-- FRONT datum tint -->
                    <path d="M521,511 H1063 L1100,586 H558 Z" fill="#f6f2ee"/>

                    <g stroke="#1d2026" stroke-linejoin="round">
                        <!-- plate side -->
                        <path d="M572,650 L587,682 C594,697 605,706 618,712 L921,856 C955,874 1000,881 1043,882 L1020,837 L900,780 L597,640 Z" fill="#717884"/>
                        <!-- plate face -->
                        <path d="M855,429 L713,480 L635,509 C600,522 573,552 562,586 C552,619 562,650 597,668 L900,812 C935,828 975,836 1020,837 L1031,803 L900,600 Z" fill="#a9b8ca"/>
                    </g>
                    <path d="M634,510 H812 V586 H562 C573,552 600,522 634,510 Z" fill="#aab2be"/>
                    <g stroke="#1d2026" fill="none">
                        <path d="M635,509 C600,522 573,552 562,586"/>
                        <path d="M597,668 L618,712 M900,812 L921,856"/>
                        <path d="M683,540 C653,540 623,561 615,586 C607,611 625,632 655,632 C685,632 715,611 723,586 C731,561 713,540 683,540 Z" fill="url(#g-bore)"/>
                        <path clip-path="url(#c-bore)" d="M706,585 C676,585 646,606 638,631 L655,660 H760 V589 C745,587 725,585 706,585 Z" fill="#f0e8e1"/>
                        <path d="M683,540 C653,540 623,561 615,586 C607,611 625,632 655,632 C685,632 715,611 723,586 C731,561 713,540 683,540 Z"/>
                        <!-- ring side and face -->
                        <path d="M820,648 L848,707 C880,768 940,803 1031,803 L995,731 L900,690 Z" fill="#717884"/>
                        <path d="M1128,297 C988,297 844,394 808,514 C771,634 855,731 995,731 L1128,420 Z" fill="#a9b8ca"/>
                    </g>
                    <path d="M1128,297 L1111,354 L1012,673 L995,731 Z" fill="#fff"/>
                    <path d="M1111,354 L1169,471 L1070,791 L1012,673 Z" fill="#f7f3ee"/>
                    <!-- bore of the ring -->
                    <path d="M1111,354 C1008,354 902,425 875,513 C847,602 909,673 1012,673 L1070,791 L1169,471 Z" fill="url(#g-wall)"/>
                    <path d="M1169,471 C1066,471 960,542 932,631 Q930,642 928,653 C947,667 975,673 1012,673 L1070,791 Z" fill="#f7f3ee"/>
                    <path clip-path="url(#c-open)" d="M920,511 H1063 L1123,634 H920 Z" fill="#f0e8e1"/>
                    <g fill="none" stroke="#1d2026">
                        <path d="M1111,354 C1008,354 902,425 875,513 C847,602 909,673 1012,673"/>
                        <path d="M1169,471 C1066,471 960,542 932,631 Q929,642 928,653"/>
                    </g>

                    <!-- section faces on the RIGHT datum -->
                    <path d="M1139,258 L1200,380 L1042,886 L982,765 Z" fill="#37bb3c" fill-opacity=".34"/>
                    <g stroke="#16241c">
                        <path d="M1148,336 L1175,335 L1165,369 Z" fill="#84ba9e" stroke="#2c5a38"/>
                        <path d="M1128,297 L1165,369 L1175,335 L1198,379 L1169,471 L1111,354 Z" fill="#4f815e"/>
                        <path d="M1012,673 L1070,791 L1043,882 L1020,837 L1031,803 L995,731 Z" fill="#4f815e"/>
                    </g>
                    <path d="M658,377 H1201" stroke="#996633"/>
                    <path d="M658,377 L572,655" stroke="#996633"/>
                    <path d="M1203,377 L1046,885" stroke="#996633"/>

                    <path d="M521,511 H1063 L1123,634 H581 Z" fill="none" stroke="#27e5e5" stroke-width="3"/>
                    <path d="M1139,258 L1200,380 L1042,887 L982,765 Z" fill="none" stroke="#33cc4d" stroke-width="3" stroke-linejoin="round"/>
                    <path d="M1061,513 L1119,632 M666,580 L694,637" stroke="#8f6130" stroke-dasharray="9 3 3 3"/>

                    <g fill="none">
                        <path d="M823,572 H845" stroke="#f33"/><circle cx="845" cy="572" r="2" fill="#f33"/>
                        <path d="M823,572 L816,558" stroke="#3f3"/><circle cx="816" cy="557" r="3" fill="#3f3"/>
                        <path d="M823,573 L818,590" stroke="#3ff"/><circle cx="817" cy="591" r="3" fill="#3ff"/>
                    </g>
                    <path d="M798,634 L800,634 L789,678 L792,680 L781,691 L778,675 L785,677 Z" fill="#ff80cc" stroke="#ff80cc"/>
                    <path d="M1125,631 H1150" stroke="#f33"/><path d="M1137,629 L1147,631 L1137,634 Z" fill="#f33"/>
                    <path d="M1141,620 V631" stroke="#996633"/>
                    <path d="M1113,617 L1117,625" stroke="#3f3" stroke-width="2"/>
                    <path d="M1118,636 L1112,657" stroke="#3ff"/>

                    <g class="cad">
                        <text x="522" y="509" fill="#27e5e5">FRONT</text>
                        <text x="1203" y="377" fill="#996633">TOP</text>
                        <text x="692" y="631" fill="#996633">A_2</text>
                        <text x="1122" y="644" fill="#996633">PRT_CSYS_DEF</text>
                        <text x="1043" y="888" fill="#33cc4d">RIGHT</text>
                        <text x="1153" y="628" fill="#f33">X</text>
                        <text x="1098" y="607" fill="#3f3">Y</text>
                        <text x="1100" y="670" fill="#3ff">Z</text>
                    </g>
                    <text class="remark" x="754" y="310">站在物体后面来观察物体</text>
                </svg>

                <div class="view-tools">
                    <button class="tool" aria-label="重新调整"><svg class="icon"><use href="#v-refit"/></svg></button>
                    <button class="tool" aria-label="放大"><svg class="icon"><use href="#v-in"/></svg></button>
                    <button class="tool" aria-label="缩小"><svg class="icon"><use href="#v-out"/></svg></button>
                    <button class="tool" aria-label="重画"><svg class="icon"><use href="#v-repaint"/></svg></button>
                    <button class="tool" aria-label="渲染选项"><svg class="icon-view"><use href="#v-render"/></svg></button>
                    <button class="tool" aria-label="显示样式"><svg class="icon-view"><use href="#v-display"/></svg></button>
                    <button class="tool" aria-label="已保存方向"><svg class="icon-view"><use href="#v-saved"/></svg></button>
                    <button class="tool" aria-label="视图管理器"><svg class="icon"><use href="#v-manager"/></svg></button>
                    <button class="tool" aria-label="透视图"><svg class="icon"><use href="#v-persp"/></svg></button>
                    <button class="tool" aria-label="截面"><svg class="icon-view"><use href="#v-section"/></svg></button>
                    <button class="tool" aria-label="基准显示"><svg class="icon-view"><use href="#v-datum"/></svg></button>
                    <button class="tool on" aria-label="注释显示"><svg class="icon"><use href="#v-annot"/></svg></button>
                    <button class="tool on" aria-label="旋转中心"><svg class="icon"><use href="#v-spin"/></svg></button>
                    <button class="tool" aria-label="仿真" disabled><svg class="icon"><use href="#v-sim"/></svg></button>
                    <button class="tool" aria-label="暂停" disabled><svg class="icon"><use href="#v-pause"/></svg></button>
                    <button class="tool" aria-label="动画" disabled><svg class="icon"><use href="#v-anim"/></svg></button>
                </div>

                <div class="watermark">
                    <svg class="flame" viewBox="0 0 20 44"><path d="M5 0c14 10 20 28 3 42-4 1-6-1-6-4 5-4 8-8 7-14-1-6-4-10-8-15 7 4 11 8 12 14 2-9-2-16-8-23z" fill="#ff6633"/></svg>
                    <div class="forum"><b>野火</b>论坛</div>
                    <div class="url">www.proewildfire.cn</div>
                </div>
            </main>
        </div>
        <footer class="status"></footer>

        <form class="dialog">
            <div class="dialog-title">草绘<button type="button" class="dialog-close" aria-label="关闭对话框"><svg viewBox="0 0 8 8"><path d="M1 0l6 8M7 0L1 8" stroke="#666" stroke-width="2"/></svg></button></div>
            <div class="dialog-main">
                <div class="tabs">
                    <button type="button" class="tab current">放置</button>
                    <button type="button" class="tab">属性</button>
                </div>
                <div class="tab-page">
                    <div class="legend">草绘平面</div>
                    <div class="field plane-row">
                        <label for="plane">平面</label>
                        <input id="plane" type="text" value="FRONT:F3(基准平面)" disabled>
                        <button type="button" class="btn">使用先前的</button>
                    </div>
                    <div class="legend">草绘方向</div>
                    <div class="field flip-row">
                        <span>草绘视图方向</span>
                        <button type="button" class="btn">反向</button>
                    </div>
                    <div class="field">
                        <label for="ref">参考</label>
                        <input id="ref" class="picked" type="text" value="RIGHT:F1(基准平面)">
                    </div>
                    <div class="field">
                        <label for="orient">方向</label>
                        <div class="combo">
                            <select id="orient"><option>左</option><option>右</option><option>上</option><option>下</option></select>
                            <svg class="arrow"><use href="#i-down"/></svg>
                        </div>
                    </div>
                </div>
            </div>
            <div class="dialog-actions">
                <button type="button" class="btn primary">草绘</button>
                <button type="button" class="btn">取消</button>
            </div>
        </form>
    </div>
</body>
</html>
```

FILE: styles.css
```css
* {
    margin: 0;
    padding: 0;
    box-sizing: border-box;
}

body {
    display: flex;
    height: 100vh;
    overflow: hidden;
    font-family: "Noto Sans", "Noto Sans CJK SC", sans-serif;
    font-size: 12px;
    line-height: 16px;
    color: #4a4c4d;
    background-color: #fff;
}

button,
input,
select {
    font: inherit;
    color: inherit;
    border: 0;
    background: none;
}

svg {
    display: block;
    flex: none;
}

ul {
    list-style: none;
}

.defs {
    position: absolute;
    width: 0;
    height: 0;
}

.icon {
    width: 16px;
    height: 16px;
}

.icon-big {
    width: 32px;
    height: 32px;
}

.icon-root {
    width: 14px;
    height: 14px;
}

.icon-doc {
    width: 20px;
    height: 20px;
}

.icon-view {
    width: 18px;
    height: 18px;
}

.arrow {
    width: 8px;
    height: 4px;
    color: #6b6d6e;
}

:disabled .arrow {
    color: #a8aaab;
}

.desktop-edge {
    width: 6px;
    flex: none;
    border-right: 3px solid #b8bcc0;
    background: linear-gradient(#8cadb9 0, #8cadb9 95px, #e4e6e8 95px, #e4e6e8 808px, #20382f 808px, #5f8781 979px);
}

.app {
    position: relative;
    flex: 1;
    min-width: 0;
    display: flex;
    flex-direction: column;
}

/* title bar */
.titlebar {
    display: grid;
    grid-template-columns: 1fr auto 1fr;
    align-items: center;
    height: 29px;
    border-top: 1px solid #b3b7b8;
    background-color: #dae0e0;
}

.quick,
.window-buttons {
    display: flex;
    align-items: center;
}

.quick button {
    width: 24px;
    display: flex;
    justify-content: center;
    color: #a4a8a8;
}

.quick .arrow {
    color: inherit;
}

.quick .drop {
    width: 14px;
    padding-right: 3px;
}

.quick .dark {
    color: #444;
}

.quick .custom {
    border-left: 1px solid #a5abab;
}

.logo {
    display: flex;
    align-items: center;
    gap: 4px;
    width: 84px;
    padding-left: 8px;
}

.brand {
    padding-bottom: 3px;
    font-family: Lato, sans-serif;
    font-size: 19px;
    line-height: 20px;
}

.brand sup {
    font-size: 7px;
    line-height: 0;
}

.title {
    font-size: 13px;
    color: #b2b6b6;
}

.window-buttons {
    justify-content: flex-end;
    gap: 11px;
    padding-right: 6px;
}

/* menu bar */
.menubar {
    display: flex;
    height: 29px;
    background-color: #3d4545;
    color: #fff;
}

.menu {
    padding: 0 24px 0 23px;
    font-size: 13px;
}

.menu.file {
    width: 66px;
    padding: 0;
    background: linear-gradient(#6ccb41, #4faa2e);
}

.menu.active {
    width: 73px;
    padding: 0;
    background-color: #f7f9fb;
    color: #3e8421;
}

.menu-tools {
    display: flex;
    align-items: center;
    gap: 8px;
    margin-left: auto;
    padding-right: 3px;
}

.menu-tools .arrow {
    color: #fff;
}

.help {
    width: 10px;
    font-size: 14px;
    font-weight: bold;
}

/* ribbon */
.ribbon {
    display: flex;
    height: 113px;
    border-bottom: 1px solid #b0bec1;
    background-color: #f7f9fb;
}

.group {
    display: flex;
    flex-direction: column;
    height: 108px;
    margin-top: 2px;
    padding: 0 7px;
    border-right: 1px solid #b4b8ba;
}

.lead-big {
    padding-left: 3px;
}

.tail-big {
    padding-right: 3px;
}

.group-body {
    display: flex;
    gap: 4px;
    height: 84px;
}

.col + .col {
    margin-left: 4px;
}

.cmd {
    display: flex;
    align-items: center;
    gap: 4px;
    height: 28px;
    padding-bottom: 2px;
    white-space: nowrap;
}

.cmd .arrow {
    margin-left: 2px;
}

.cmd:disabled,
.big:disabled {
    color: #acaeaf;
}

.big {
    display: flex;
    flex-direction: column;
    align-items: center;
    min-width: 40px;
    height: 83px;
    padding: 4px;
    white-space: nowrap;
}

.big .icon-big {
    margin-bottom: 10px;
}

.big .arrow {
    margin-top: 6px;
}

.big.pressed {
    padding: 3px;
    border: 1px solid #a5a9aa;
    background-color: #dfe1e3;
}

.group-name {
    display: flex;
    align-items: center;
    justify-content: center;
    gap: 3px;
    height: 28px;
    margin: 0 -3px;
    white-space: nowrap;
    color: #333;
}

/* navigator */
.workspace {
    flex: 1;
    min-height: 0;
    display: flex;
}

.navigator {
    width: 293px;
    flex: none;
    display: flex;
    flex-direction: column;
    border-right: 3px solid #d7dcdd;
    background-color: #f7f9fb;
}

.nav-tabs {
    display: flex;
    height: 26px;
    background-color: #d7dddd;
}

.nav-tab {
    display: flex;
    align-items: center;
    padding: 0 7px;
}

.nav-tab.current {
    width: 32px;
    padding: 0 10px;
    background-color: #f7f9fb;
}

.tree-tools {
    display: flex;
    align-items: center;
    gap: 2px;
    height: 32px;
    padding-left: 14px;
}

.fold {
    width: 12px;
}

.fold svg {
    width: 10px;
    height: 8px;
    fill: #777;
}

.grip {
    width: 4px;
    height: 16px;
    margin-left: 3px;
}

.tool {
    width: 24px;
    height: 24px;
    display: flex;
    align-items: center;
    justify-content: center;
}

.tool.on {
    border: 1px solid #adb0b2;
    background-color: #dfe1e3;
}

.tool.first {
    margin-left: 16px;
}

.tool.second {
    margin-left: 20px;
}

.tool.first + .tool,
.tool.second + .tool {
    width: 18px;
}

.sep {
    width: 1px;
    height: 24px;
    margin: 0 2px;
    background-color: #b4b8ba;
}

.sep.wide {
    margin-left: 9px;
}

.joined {
    display: flex;
}

.tool.more {
    margin-left: 8px;
    font-size: 16px;
}

.filter {
    display: flex;
    align-items: center;
    height: 29px;
    padding-left: 12px;
    gap: 4px;
}

.filter input {
    flex: 1;
    height: 29px;
    border: 1px solid #a9b3b6;
    background-color: #fff;
}

.tree-root {
    display: flex;
    align-items: center;
    gap: 6px;
    height: 22px;
    margin-top: 5px;
    padding-left: 12px;
}

.node {
    position: relative;
    display: flex;
    align-items: center;
    gap: 4px;
    height: 22px;
    padding-left: 31px;
}

.node span {
    padding: 2px 1px;
    white-space: nowrap;
}

.node .selected {
    padding: 3px 1px;
    background-color: #aee1fd;
    color: #333;
}

/* guide lines of the trees */
.node::before {
    content: "";
    position: absolute;
    left: 19px;
    top: 0;
    width: 9px;
    height: 100%;
    border-left: 1px solid #c4c8ca;
    background: linear-gradient(#c4c8ca, #c4c8ca) 0 50% / 100% 1px no-repeat;
}

.node.last::before {
    height: 50%;
    border-bottom: 1px solid #c4c8ca;
    background: none;
}

.node.has-kids::before {
    background: none;
}

.node.has-kids::after {
    content: "";
    position: absolute;
    left: 17px;
    top: 50%;
    margin-top: -4px;
    border: 4px solid transparent;
    border-left: 4px solid #666;
    border-right: 0;
    outline: 1px solid #f7f9fb;
    background-color: #f7f9fb;
}

.insert-line {
    height: 6px;
    margin: 4px 5px 0 11px;
    border: solid #5dbf3c;
    border-width: 0 2px;
    background: linear-gradient(#5dbf3c, #5dbf3c) 0 50% / 100% 2px no-repeat;
}

.star {
    width: 8px;
    height: 8px;
    margin-bottom: 6px;
}

.pending {
    padding-top: 4px;
}

.pending .node span {
    padding: 0;
    margin-left: -3px;
}

.layer-pane {
    display: flex;
    flex-direction: column;
    margin: auto 5px 0 8px;
    border-top: 3px solid #d7dcdd;
}

.layer-pane .tree-tools {
    padding-left: 6px;
}

.model-pick {
    display: flex;
    height: 25px;
    border: 1px solid #cdd0d1;
}

.model-pick button {
    width: 24px;
    display: flex;
    align-items: center;
    justify-content: center;
    border-right: 1px solid #cdd0d1;
    background-color: #ebedef;
}

.pick,
.combo {
    position: relative;
    flex: 1;
    display: flex;
}

.pick select,
.combo select {
    flex: 1;
    appearance: none;
    padding: 0 7px;
}

.pick select {
    opacity: 1;
    color: #a5a7a8;
    background-color: #f7f7f7;
}

.pick .arrow,
.combo .arrow {
    position: absolute;
    right: 3px;
    top: 10px;
    pointer-events: none;
}

.pick .arrow,
.scrollbar .arrow {
    color: #999b9c;
}

.pick::after,
.combo::after {
    content: "";
    position: absolute;
    right: 14px;
    top: 0;
    bottom: 0;
    border-left: 1px solid #c3c6c8;
}

.layer-body {
    display: flex;
    justify-content: space-between;
}

.layer-list {
    padding-bottom: 2px;
}

.layer-list .tree-root {
    height: 19px;
    margin-top: 0;
    gap: 9px;
    padding-left: 3px;
}

.layers .node {
    height: 20px;
    padding-left: 23px;
    gap: 8px;
}

.layers .node::before {
    left: 11px;
}

.layers .node::after {
    left: 9px;
}

.scrollbar {
    width: 15px;
    margin-bottom: 5px;
    display: flex;
    flex-direction: column;
    border: 1px solid #cdd0d1;
    background-color: #e2e5e7;
}

.scrollbar button {
    height: 14px;
    display: flex;
    align-items: center;
    justify-content: center;
    background-color: #f7f9fb;
}

.scrollbar .thumb {
    flex: 1;
    margin-bottom: 3px;
    border: 1px solid #b9bdbf;
    background-color: #f9fafb;
}

.up {
    transform: rotate(180deg);
}

/* graphics window */
.viewport {
    position: relative;
    flex: 1;
    display: flex;
    flex-direction: column;
    align-items: center;
    padding: 7px 0 0 3px;
    background-color: #fff;
}

.scene {
    position: absolute;
    inset: 0;
    width: 100%;
    height: 100%;
    shape-rendering: crispEdges;
}

.cad {
    font-family: "Liberation Mono", monospace;
    font-size: 14px;
}

.remark {
    font-family: "Noto Sans CJK SC", sans-serif;
    font-size: 20px;
    font-weight: 300;
    fill: #ff1a1a;
}

.view-tools {
    position: relative;
    display: flex;
    gap: 2px;
    padding: 3px;
    border: 1px solid #9b9d9f;
    background-color: #f7f9fb;
}

.watermark {
    position: absolute;
    right: 17px;
    bottom: 3px;
    width: 168px;
}

.forum {
    font-family: "Liberation Sans", "Noto Sans CJK SC", sans-serif;
    font-size: 41px;
    line-height: 46px;
    font-style: italic;
    font-weight: 300;
    white-space: nowrap;
    color: #111;
}

.forum b {
    font-weight: 300;
    color: #ff6633;
}

.flame {
    position: absolute;
    left: 63px;
    top: -17px;
    width: 20px;
    height: 44px;
}

.url {
    font-family: "DejaVu Sans", sans-serif;
    font-size: 15px;
    line-height: 16px;
    font-style: italic;
    color: #888;
}

.status {
    height: 5px;
    border-top: 1px solid #a9bbbe;
    background-color: #f3f8f9;
}

/* sketch dialog */
.dialog {
    position: absolute;
    left: 205px;
    top: 148px;
    width: 290px;
    border: 1px solid #a7abac;
    border-radius: 8px;
    overflow: hidden;
    background-color: #eff0f2;
    box-shadow: 0 12px 30px rgba(0, 0, 0, 0.3);
}

.dialog-title {
    position: relative;
    height: 30px;
    line-height: 34px;
    text-align: center;
    color: #222;
    background-color: #dadede;
}

.dialog-close {
    position: absolute;
    right: 11px;
    top: 11px;
}

.dialog-close svg {
    width: 8px;
    height: 9px;
}

.dialog-main {
    padding: 20px 11px 16px;
}

.tabs {
    display: flex;
}

.tab {
    width: 44px;
    height: 25px;
    padding-top: 2px;
    border: 1px solid #c3c7ca;
    border-left: 0;
    border-bottom: 0;
    color: #77797b;
}

.tab.current {
    height: 26px;
    margin-bottom: -1px;
    border-left: 1px solid #c3c7ca;
    background-color: #fcfcfc;
    color: #222;
    z-index: 1;
}

.tab-page {
    display: flex;
    flex-direction: column;
    gap: 5px;
    padding: 11px 20px 6px 15px;
    border: 1px solid #c3c7ca;
    background-color: #fcfcfc;
}

.legend {
    display: flex;
    align-items: center;
    gap: 6px;
    margin-bottom: 6px;
}

.legend::after {
    content: "";
    flex: 1;
    margin-right: -9px;
    border-top: 1px solid #c3c7ca;
}

.field {
    display: flex;
    align-items: center;
    gap: 8px;
    padding-left: 6px;
}

.plane-row {
    gap: 5px;
    padding-left: 9px;
    margin-bottom: 5px;
}

.flip-row {
    gap: 6px;
    padding-left: 8px;
    margin-bottom: 4px;
}

.field input {
    flex: 1;
    min-width: 0;
    height: 23px;
    padding: 0 2px 0 16px;
    border: 1px solid #b3b7ba;
    background-color: #fafafa;
}

.field input:disabled {
    color: #97999b;
    background-color: #f7f5fd;
}

.field .picked {
    color: #333;
    background-color: #ebfbdd;
    box-shadow: inset 0 0 0 1px #fcfcfc;
}

.btn {
    height: 25px;
    padding: 0 9px;
    border: 1px solid #b0b3b5;
    background-color: #f8f8f8;
    white-space: nowrap;
    color: #333;
}

.combo {
    flex: none;
    width: 73px;
    height: 25px;
    border: 1px solid #b0b3b5;
    background-color: #f8f8f8;
}

.dialog-actions {
    display: flex;
    justify-content: flex-end;
    gap: 8px;
    padding: 11px 11px 13px;
    border-top: 1px solid #c3c7ca;
}

.dialog-actions .btn {
    width: 60px;
}

.btn.primary {
    border-color: #6ecaf5;
    background-color: #a1e0ff;
}
```
